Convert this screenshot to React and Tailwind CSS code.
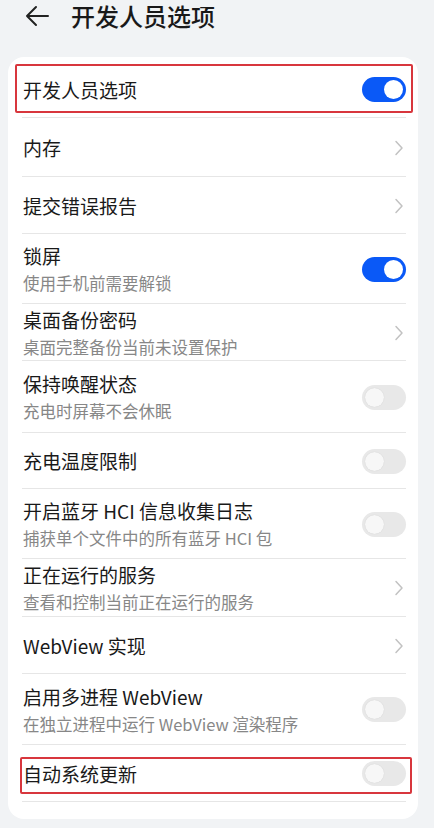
import React from 'react';

const rows = [
  { title: '开发人员选项', type: 'on', h: 57, mark: 'a' },
  { title: '内存', type: 'arrow', h: 59 },
  { title: '提交错误报告', type: 'arrow', h: 57 },
  { title: '锁屏', sub: '使用手机前需要解锁', type: 'on', h: 70 },
  { title: '桌面备份密码', sub: '桌面完整备份当前未设置保护', type: 'arrow', h: 57 },
  { title: '保持唤醒状态', sub: '充电时屏幕不会休眠', type: 'off', h: 72 },
  { title: '充电温度限制', type: 'off', h: 56 },
  { title: '开启蓝牙 HCI 信息收集日志', sub: '捕获单个文件中的所有蓝牙 HCI 包', type: 'off', h: 70 },
  { title: '正在运行的服务', sub: '查看和控制当前正在运行的服务', type: 'arrow', h: 58 },
  { title: 'WebView 实现', type: 'arrow', h: 57 },
  { title: '启用多进程 WebView', sub: '在独立进程中运行 WebView 渲染程序', type: 'off', h: 71 },
  { title: '自动系统更新', type: 'off', h: 57, mark: 'b' },
];

const Toggle = ({ on }) => (
  <div
    className={
      on
        ? 'w-[44px] h-[25px] rounded-full bg-[#0a59f7] flex items-center justify-end px-[3px]'
        : 'w-[44px] h-[25px] rounded-full bg-[#e8e8e8] flex items-center justify-start px-[3px]'
    }
  >
    <div className={on ? 'w-[19px] h-[19px] rounded-full bg-white' : 'w-[19px] h-[19px] rounded-full bg-[#f7f7f7] shadow-[0_0_1px_rgba(0,0,0,0.15)]'} />
  </div>
);

const Chevron = () => (
  <svg width="10" height="16" viewBox="0 0 10 16" className="mr-[2px]">
    <path d="M2 1.5 L8 8 L2 14.5" fill="none" stroke="#c2c2c2" strokeWidth="1.5" strokeLinecap="round" strokeLinejoin="round" />
  </svg>
);

const Row = ({ row }) => (
  <div className="relative" style={{ height: row.h }}>
    {row.mark === 'a' && (
      <div className="absolute left-[-7px] right-[-7px] top-[3px] bottom-[5px] border-2 border-[#d8363d] rounded-[2px]" />
    )}
    {row.mark === 'b' && (
      <div className="absolute left-[-2px] right-[-6px] top-[12px] bottom-[8px] border-2 border-[#d8363d] rounded-[2px]" />
    )}
    <div className="h-full flex items-center justify-between pl-[1px]">
      <div className="flex flex-col">
        <div className="text-[19px] leading-[26px] text-[#191919]">{row.title}</div>
        {row.sub && <div className="text-[16.5px] leading-[24px] text-[#878787] mt-[2px]">{row.sub}</div>}
      </div>
      {row.type === 'arrow' ? <Chevron /> : <Toggle on={row.type === 'on'} />}
    </div>
    <div className="absolute left-0 right-0 bottom-0 h-px bg-[#e6e6e6]" />
  </div>
);

export default function App() {
  return (
    <div
      className="w-[434px] h-[828px] bg-[#f1f3f5] overflow-hidden"
      style={{ fontFamily: '"Noto Sans CJK SC", "Noto Sans", sans-serif' }}
    >
      <div className="h-[32px] flex items-center pl-[25px]">
        <svg width="24" height="22" viewBox="0 0 24 22">
          <path d="M23 11 H2 M11 2 L2 11 L11 20" fill="none" stroke="#222" strokeWidth="2" strokeLinecap="round" strokeLinejoin="round" />
        </svg>
        <div className="ml-[22px] text-[24px] font-medium text-[#191919] leading-[26px]">开发人员选项</div>
      </div>
      <div className="mt-[25px] ml-[8px] w-[410px] bg-white rounded-[16px] pl-[14px] pr-[12px] pt-[4px] pb-[17px]">
        {rows.map((r, i) => (
          <Row key={i} row={r} />
        ))}
      </div>
    </div>
  );
}
